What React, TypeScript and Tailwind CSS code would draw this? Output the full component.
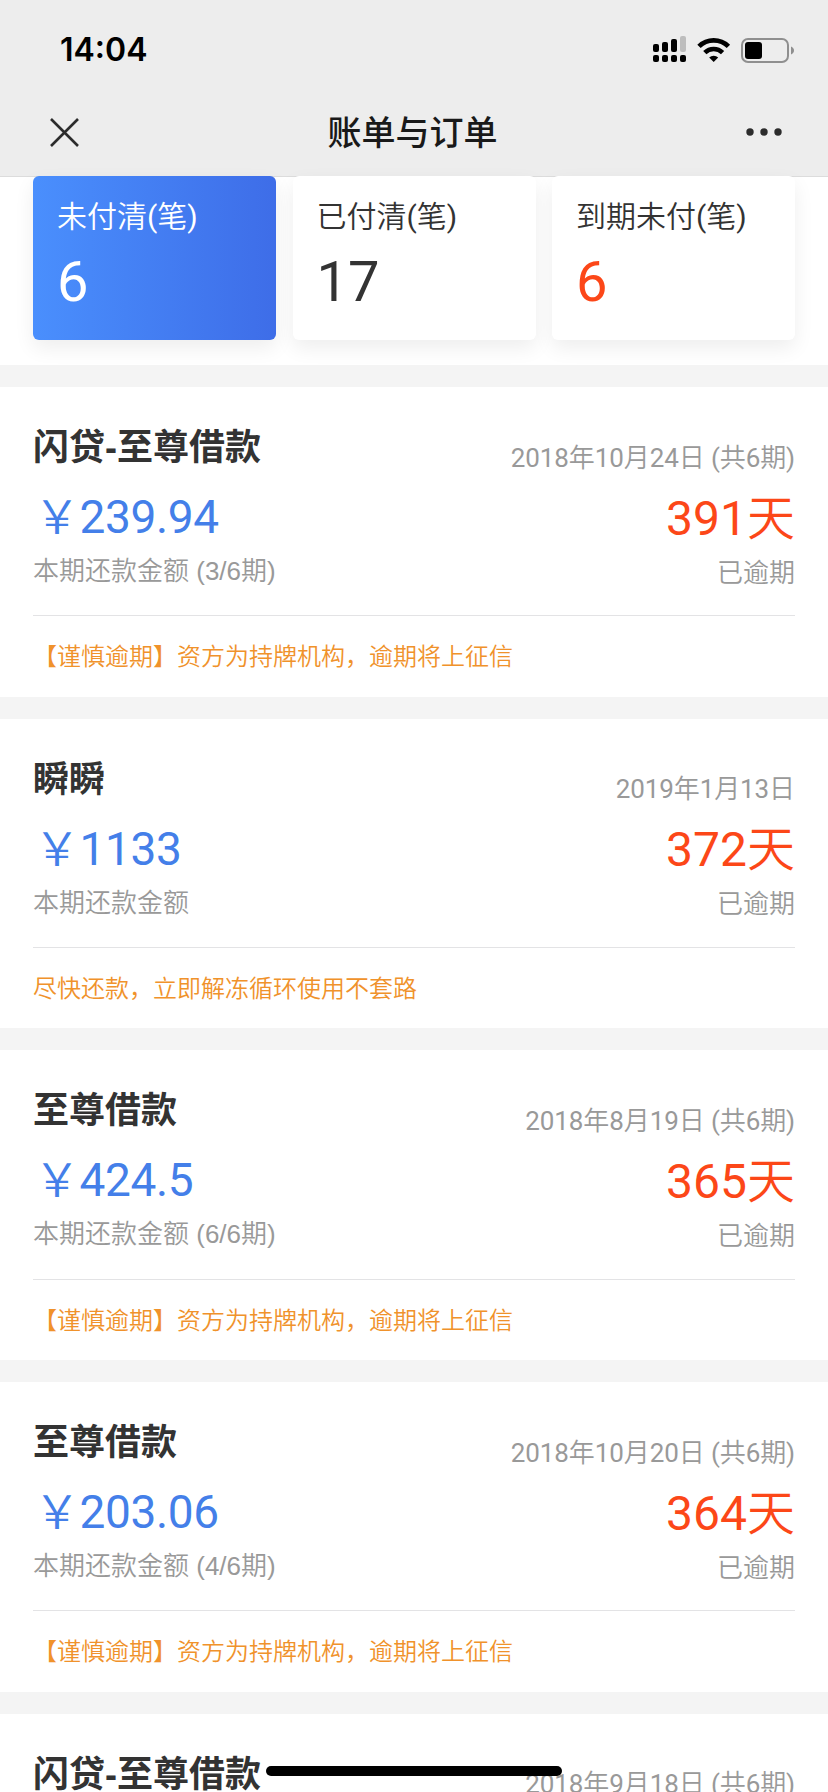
const tiles = [
  { label: "未付清(笔)", value: "6", className: "bg-gradient-to-r from-[#4a8ffd] to-[#3e6de8] text-white", valueClass: "text-white" },
  { label: "已付清(笔)", value: "17", className: "bg-white text-[#333333]", valueClass: "text-[#333333]" },
  { label: "到期未付(笔)", value: "6", className: "bg-white text-[#333333]", valueClass: "text-[#fc4718]" },
];

type BillItem = {
  name: string;
  date: string;
  amount?: string;
  period?: string;
  days?: string;
  note?: string;
};

const bills: BillItem[] = [
  { name: "闪贷-至尊借款", date: "2018年10月24日 (共6期)", amount: "239.94", period: "本期还款金额 (3/6期)", days: "391", note: "【谨慎逾期】资方为持牌机构，逾期将上征信" },
  { name: "瞬瞬", date: "2019年1月13日", amount: "1133", period: "本期还款金额", days: "372", note: "尽快还款，立即解冻循环使用不套路" },
  { name: "至尊借款", date: "2018年8月19日 (共6期)", amount: "424.5", period: "本期还款金额 (6/6期)", days: "365", note: "【谨慎逾期】资方为持牌机构，逾期将上征信" },
  { name: "至尊借款", date: "2018年10月20日 (共6期)", amount: "203.06", period: "本期还款金额 (4/6期)", days: "364", note: "【谨慎逾期】资方为持牌机构，逾期将上征信" },
  { name: "闪贷-至尊借款", date: "2018年9月18日 (共6期)" },
];

function StatusIcons() {
  return (
    <svg width="142" height="28" viewBox="652 34 142 28">
      <rect x="653" y="43" width="6" height="8" rx="2" />
      <rect x="662" y="41" width="6" height="10" rx="2" />
      <rect x="671" y="38" width="6" height="13" rx="2" />
      <rect x="680" y="35" width="6" height="16" rx="2" fill="#bdbdbd" />
      <rect x="653" y="54" width="6" height="7" rx="2" />
      <rect x="662" y="54" width="6" height="7" rx="2" />
      <rect x="671" y="54" width="6" height="7" rx="2" />
      <rect x="680" y="54" width="6" height="7" rx="2" />
      <path d="M699 45.400a21 21 0 0 1 29.400 0" fill="none" stroke="#000" strokeWidth="4.8" />
      <path d="M704.800 51.600a12.800 12.800 0 0 1 17.800 0" fill="none" stroke="#000" strokeWidth="4.6" />
      <path d="M709.200 56.400a6.600 6.600 0 0 1 9 0l-4.500 4.600z" />
      <rect x="742" y="38" width="46" height="23" rx="6" fill="none" stroke="#8f8f8f" strokeWidth="2" />
      <rect x="745" y="41" width="17" height="17" rx="3" />
      <path d="M791 45.500c4 1.500 4 6.500 0 8z" fill="#8f8f8f" />
    </svg>
  );
}

function Header() {
  return (
    <header className="h-[177px] shrink-0 bg-[#ededed] border-b border-[#dcdcdc]">
      <div className="h-[88px] flex justify-between items-center pl-[60px] pr-[34px] pt-[10px]">
        <span className="font-['Inter',sans-serif] font-semibold text-[32px] leading-10 text-black pt-[2px]">14:04</span>
        <StatusIcons />
      </div>
      <div className="h-[88px] flex justify-between items-center pl-[50px] pr-[45px]">
        <svg width="29" height="29" viewBox="0 0 29 29" stroke="#2c2c2c" strokeWidth="2.6">
          <path d="M1 1l27 27M28 1L1 28" />
        </svg>
        <h1 className="font-['Noto_Sans_CJK_SC',sans-serif] font-medium text-[34px] leading-10 text-[#191919] pb-[3px]">账单与订单</h1>
        <svg width="37" height="8" viewBox="0 0 37 8" fill="#2c2c2c">
          <circle cx="4" cy="4" r="3.7" />
          <circle cx="18" cy="4" r="3.7" />
          <circle cx="32" cy="4" r="3.7" />
        </svg>
      </div>
    </header>
  );
}

function Bill({ bill }: { bill: BillItem }) {
  return (
    <section className="h-[309.7px] shrink-0 bg-white px-[33px]">
      <div className="h-[229.3px] flex justify-between border-b border-[#e3e3e5]">
        <div className="flex flex-col items-start pt-[37px]">
          <h2 className="font-['Liberation_Sans','Noto_Sans_CJK_SC',sans-serif] font-bold text-[36px] leading-[48px] text-[#333333]">{bill.name}</h2>
          {bill.amount && <p className="text-[46px] leading-[60px] tracking-[-0.4px] text-[#447fe9] pl-px mt-[15px]">￥{bill.amount}</p>}
          {bill.period && <p className="font-['Liberation_Sans','Noto_Sans_CJK_SC_DemiLight','Noto_Sans_CJK_SC',sans-serif] text-[26px] leading-[36px] text-[#999999] mt-[6px]">{bill.period}</p>}
        </div>
        <div className="flex flex-col items-end pt-[52.5px]">
          <p className="text-[26px] leading-[36px] tracking-[-0.1px] text-[#999999]">{bill.date}</p>
          {bill.days && <p className="text-[48px] leading-[60px] text-[#fc4718] mt-[13px]">{bill.days}天</p>}
          {bill.days && <p className="text-[26px] leading-[36px] text-[#999999] mt-[6px]">已逾期</p>}
        </div>
      </div>
      {bill.note && <p className="text-[24px] leading-[82px] text-[#f0922b]">{bill.note}</p>}
    </section>
  );
}

export default function App() {
  return (
    <div className="relative w-[828px] h-[1792px] overflow-hidden flex flex-col bg-[#f4f4f4] font-['Roboto','Noto_Sans_CJK_SC_DemiLight','Noto_Sans_CJK_SC',sans-serif]">
      <Header />
      <main className="flex flex-col gap-[22px]">
        <div className="h-[188px] shrink-0 bg-white flex gap-[16.5px] px-[33px]">
          {tiles.map((tile) => (
            <div key={tile.label} className={`flex-1 h-[164px] -mt-px rounded-md pl-[24px] pt-[19px] shadow-[0_8px_20px_rgba(0,0,0,0.07)] ${tile.className}`}>
              <p className="text-[30px] leading-[44px]">{tile.label}</p>
              <p className={`text-[56px] leading-[64px] mt-[11px] ${tile.valueClass}`}>{tile.value}</p>
            </div>
          ))}
        </div>
        {bills.map((bill, i) => (
          <Bill key={i} bill={bill} />
        ))}
      </main>
      <div className="absolute left-[266px] top-[1766px] w-[296px] h-[10px] rounded-full bg-black"></div>
    </div>
  );
}
